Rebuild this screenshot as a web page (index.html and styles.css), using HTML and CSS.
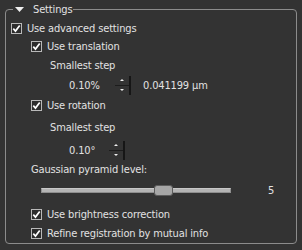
FILE: index.html
```html
<!DOCTYPE html>
<html lang="en">
<head>
    <meta charset="UTF-8">
    <title>Settings</title>
    <link rel="stylesheet" href="styles.css">
</head>
<body>
    <div class="panel">
        <fieldset class="group">
            <legend class="group-title">
                <svg class="arrow" width="9" height="5" viewBox="0 0 9 5"><polygon points="0,0 9,0 4.5,5" fill="#f0f0f0"/></svg>
                <span>Settings</span>
            </legend>

            <div class="content">
                <!-- Option principale -->
                <div class="row">
                    <span class="check"><svg width="11" height="11" viewBox="0 0 11 11"><path d="M2.3 5.6 L4.5 8.1 L8.7 2.6" fill="none" stroke="#fff" stroke-width="1.7"/></svg></span>
                    Use advanced settings
                </div>

                <!-- Translation -->
                <div class="row indent gap-4">
                    <span class="check"><svg width="11" height="11" viewBox="0 0 11 11"><path d="M2.3 5.6 L4.5 8.1 L8.7 2.6" fill="none" stroke="#fff" stroke-width="1.7"/></svg></span>
                    Use translation
                </div>
                <div class="row label gap-5">Smallest step</div>
                <div class="row value gap-6">
                    <span class="spin-text wide">0.10%</span>
                    <span class="spin-btn"><span class="up"></span><span class="down"></span></span>
                    <span class="unit">0.041199 µm</span>
                </div>

                <!-- Rotation -->
                <div class="row indent gap-6">
                    <span class="check"><svg width="11" height="11" viewBox="0 0 11 11"><path d="M2.3 5.6 L4.5 8.1 L8.7 2.6" fill="none" stroke="#fff" stroke-width="1.7"/></svg></span>
                    Use rotation
                </div>
                <div class="row label gap-8">Smallest step</div>
                <div class="row value gap-9">
                    <span class="spin-text">0.10°</span>
                    <span class="spin-btn"><span class="up"></span><span class="down"></span></span>
                </div>

                <!-- Pyramide -->
                <div class="row indent gap-5">Gaussian pyramid level:</div>
                <div class="row slider-row gap-7">
                    <div class="slider">
                        <div class="groove"></div>
                        <div class="handle"></div>
                    </div>
                    <span class="slider-value">5</span>
                </div>

                <div class="row indent gap-10">
                    <span class="check"><svg width="11" height="11" viewBox="0 0 11 11"><path d="M2.3 5.6 L4.5 8.1 L8.7 2.6" fill="none" stroke="#fff" stroke-width="1.7"/></svg></span>
                    Use brightness correction
                </div>
                <div class="row indent gap-5">
                    <span class="check"><svg width="11" height="11" viewBox="0 0 11 11"><path d="M2.3 5.6 L4.5 8.1 L8.7 2.6" fill="none" stroke="#fff" stroke-width="1.7"/></svg></span>
                    Refine registration by mutual info
                </div>
            </div>
        </fieldset>
    </div>
</body>
</html>
```

FILE: styles.css
```css
* {
    box-sizing: border-box;
}

body {
    margin: 0;
    width: 302px;
    height: 250px;
    overflow: hidden;
    background-color: #333333;
    color: #e2e2e2;
    font-family: "DejaVu Sans Condensed", "DejaVu Sans", sans-serif;
    font-size: 11px;
    letter-spacing: -0.15px;
}

.panel {
    padding: 3px 5px 0 5px;
}

/* Cadre du groupe */
.group {
    margin: 0;
    padding: 0;
    min-width: 0;
    width: 292px;
    height: 241px;
    border: 1px solid #8c8c8c;
    border-radius: 4px;
}

.group-title {
    margin-left: 7px;
    padding: 0 1px 0 2px;
    height: 13px;
    line-height: 13px;
    display: flex;
    align-items: center;
}

.arrow {
    margin-right: 9px;
}

.content {
    padding: 5px 0 0 5px;
    display: flex;
    flex-direction: column;
}

.row {
    height: 14px;
    display: flex;
    align-items: center;
    white-space: nowrap;
}

.indent { padding-left: 20px; }
.label { padding-left: 39px; }
.value { padding-left: 58px; }
.slider-row { padding-left: 30px; }

.gap-4 { margin-top: 4px; }
.gap-5 { margin-top: 5px; }
.gap-6 { margin-top: 6px; }
.gap-7 { margin-top: 7px; }
.gap-8 { margin-top: 8px; }
.gap-9 { margin-top: 9px; }
.gap-10 { margin-top: 10px; }

/* Case à cocher */
.check {
    width: 11px;
    height: 11px;
    margin-right: 5px;
    border: 1px solid #b9b9b9;
    background-color: #2c2c2c;
    display: flex;
    align-items: center;
    justify-content: center;
}

.check svg {
    flex: none;
}

/* Spin box */
.spin-text {
    width: 40px;
}

.spin-text.wide {
    width: 46px;
}

.spin-btn {
    width: 16px;
    height: 19px;
    display: flex;
    flex-direction: column;
    border-right: 2px solid #161616;
}

.spin-btn .up,
.spin-btn .down {
    flex: 1;
    display: flex;
    align-items: center;
    justify-content: center;
}

.spin-btn .up {
    border-bottom: 1px solid #1c1c1c;
}

.spin-btn .up::after {
    content: "";
    border-left: 2px solid transparent;
    border-right: 2px solid transparent;
    border-bottom: 2px solid #f0f0f0;
}

.spin-btn .down::after {
    content: "";
    border-left: 2px solid transparent;
    border-right: 2px solid transparent;
    border-top: 2px solid #f0f0f0;
}

.unit {
    margin-left: 12px;
}

/* Slider */
.slider {
    position: relative;
    width: 190px;
    height: 11px;
    display: flex;
    align-items: center;
}

.groove {
    width: 100%;
    height: 5px;
    background-color: #b4b4b4;
    border: 1px solid #8e8e8e;
    border-top-color: #c8c8c8;
}

.handle {
    position: absolute;
    left: 113px;
    top: 0;
    width: 19px;
    height: 11px;
    background-color: #a6a6a6;
    border: 1px solid #5c5c5c;
    border-radius: 3px;
}

.slider-value {
    margin-left: 37px;
}
```
